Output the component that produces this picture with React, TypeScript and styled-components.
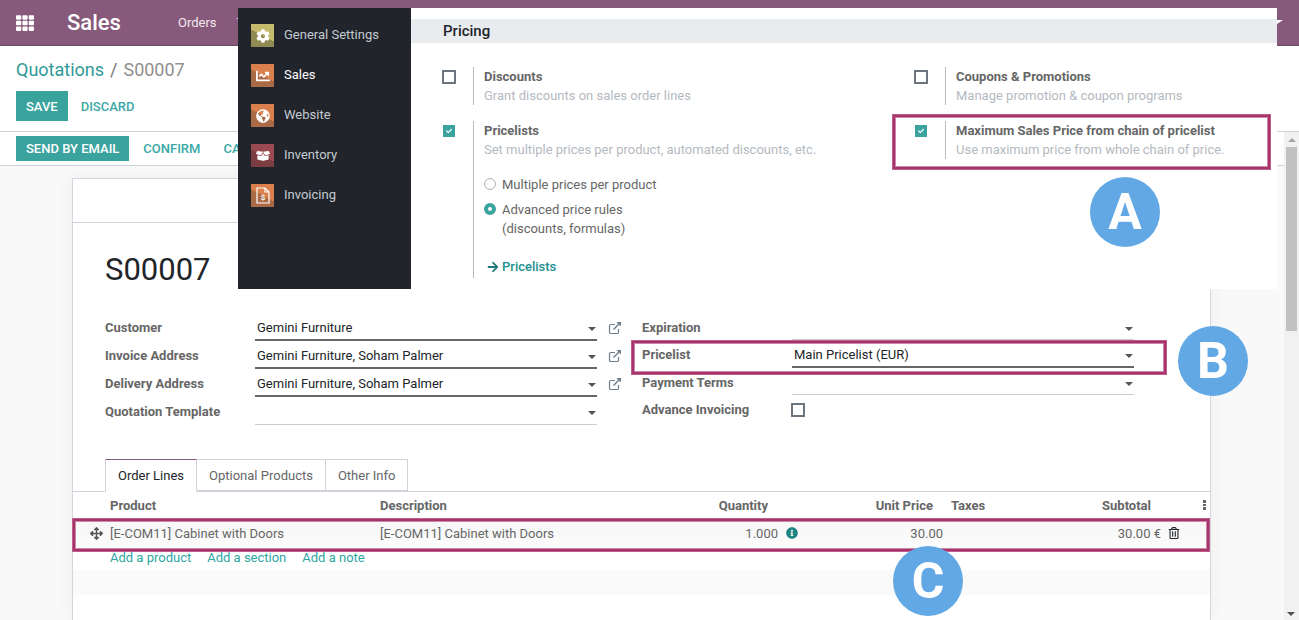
import React from "react";
import styled, { createGlobalStyle } from "styled-components";
import {
  FaTh, FaCog, FaChartLine, FaGlobeAmericas, FaBoxOpen, FaArrowRight, FaInfoCircle,
  FaRegTrashAlt, FaArrowsAlt, FaCheck,
} from "react-icons/fa";

const Global = createGlobalStyle`
  html, body { margin: 0; padding: 0; overflow: hidden; background: #fff; }
  body { font-family: Roboto, "Noto Sans", sans-serif; font-size: 13px; color: #212529; }
  * { box-sizing: border-box; }
`;

const Page = styled.div`
  position: relative; width: 1299px; height: 620px; overflow: hidden;
  display: flex; flex-direction: column; background: #fff;
`;

const Navbar = styled.header`
  height: 46px; flex: none; background: #875a7b; border-bottom: 1px solid #71495f;
  display: flex; align-items: center; color: #fff; position: relative;
`;
const GridBtn = styled.span`margin-left: 16px; width: 18px; display: flex; font-size: 18px;`;
const Brand = styled.span`margin-left: 33px; font-size: 22px; font-weight: 500; width: 111px;`;
const NavItem = styled.span`font-size: 13px; color: #f0e8ee; margin-right: 20px;`;
const NavCaret = styled.span`
  position: absolute; left: 1271px; top: 20px; width: 0; height: 0;
  border-left: 6px solid transparent; border-right: 6px solid transparent; border-top: 4px solid #fff;
`;

const ControlPanel = styled.section`
  height: 86px; flex: none; padding: 0 16px; border-bottom: 1px solid #ced4da; background: #fff;
`;
const Breadcrumb = styled.div`height: 45px; padding-top: 12px; font-size: 18px; line-height: 24px; color: #8f8f8f;`;
const Crumb = styled.span`color: #2f9a97;`;
const Sep = styled.span`margin: 0 6px; color: #777;`;
const Actions = styled.div`display: flex; align-items: center;`;
const PrimaryBtn = styled.span<{ $h: number; $px: number }>`
  height: ${p => p.$h}px; padding: 0 ${p => p.$px}px; background: #3aa39e; color: #fff; font-weight: 500;
  font-size: 13px; display: flex; align-items: center;
`;
const LinkBtn = styled.span<{ $ml: number }>`
  margin-left: ${p => p.$ml}px; color: #3aa9a5; font-weight: 500; font-size: 13px;
`;

const Scroller = styled.div`flex: 1; min-height: 0; display: flex; overflow: hidden;`;
const ScrollContent = styled.div`flex: 1; min-width: 0; background: #f9f9f9; display: flex; flex-direction: column;`;
const StatusBar = styled.div`
  height: 34px; flex: none; background: #fff; border-bottom: 1px solid #ced4da;
  padding: 4px 16px 0; display: flex; align-items: flex-start;
`;
const StatusLink = styled(LinkBtn)`line-height: 25px;`;
const Scrollbar = styled.div`
  width: 15px; flex: none; background: #f1f1f1; display: flex; flex-direction: column; align-items: center; position: relative;
`;
const ArrowUp = styled.span`
  margin-top: 6px; width: 0; height: 0; border-left: 4px solid transparent; border-right: 4px solid transparent;
  border-bottom: 4px solid #a3a3a3;
`;
const Thumb = styled.span`margin-top: 5px; width: 11px; height: 184px; background: #c1c1c1;`;
const ArrowDown = styled.span`
  position: absolute; bottom: 4px; left: 3px; width: 0; height: 0; border-left: 4px solid transparent;
  border-right: 4px solid transparent; border-top: 4px solid #505050;
`;

const Sheet = styled.main`
  margin: 12px 0 0 72px; width: 1139px; flex: 1; background: #fff; border: 1px solid #d3d6de; border-bottom: 0;
  box-shadow: 0 0 18px rgba(0, 0, 0, .05);
`;
const SheetHead = styled.div`height: 44px; border-bottom: 1px solid #ced4da;`;
const Title = styled.h1`
  margin: 0; padding: 25px 0 0 32px; height: 90px; font-size: 31px; line-height: 44px; font-weight: 400; color: #212529;
`;
const Groups = styled.div`display: flex; padding-left: 32px;`;
const Group = styled.div<{ $w: number }>`width: ${p => p.$w}px;`;
const Row = styled.div<{ $h: number }>`
  height: ${p => p.$h}px; display: grid; grid-template-columns: 150px 342px auto; align-items: start;
`;
const Label = styled.label`padding-top: 5px; line-height: 20px; font-weight: 700; font-size: 13px; color: #666;`;
const Control = styled.div<{ $filled?: boolean }>`
  height: 100%; padding: 5px 2px 0; line-height: 20px; position: relative; color: #212529; font-size: 13px;
  border-bottom: ${p => (p.$filled ? "2px solid #666" : "1px solid #ccc")};
`;
const Caret = styled.span`
  position: absolute; right: 1px; top: 14px; width: 0; height: 0; border-left: 4px solid transparent;
  border-right: 4px solid transparent; border-top: 4px solid #555;
`;
const ExtLink = styled.svg`margin: 8px 0 0 11px; display: block;`;
const Box = styled.span<{ $ml?: number; $mt?: number }>`
  display: block; width: 14px; height: 14px; border: 2px solid #6c757d; background: #fff;
  margin-left: ${p => p.$ml ?? 0}px; margin-top: ${p => p.$mt ?? 0}px;
`;

const Tabs = styled.nav`display: flex; margin: 34px 0 0 32px; height: 33px;`;
const Tab = styled.span<{ $active?: boolean }>`
  padding: 0 12px; line-height: 32px; height: ${p => (p.$active ? 33 : 32)}px; font-size: 13px; background: #fff; z-index: 1;
  color: ${p => (p.$active ? "#212529" : "#666")};
  border: 1px solid #ced4da; border-left-width: ${p => (p.$active ? 1 : 0)}px;
  border-top-color: ${p => (p.$active ? "#875a7b" : "#ced4da")};
  border-bottom-color: ${p => (p.$active ? "#fff" : "#ced4da")};
`;
const TableLine = styled.div`height: 1px; margin-top: -1px; background: #ced4da;`;
const gridCols = "37px 270px 278px 120px 165px 100px 118px 50px";
const HeadRow = styled.div`
  display: grid; grid-template-columns: ${gridCols}; height: 26px; align-items: center; font-weight: 700; color: #666; font-size: 13px;
`;
const BodyRow = styled.div`
  display: grid; grid-template-columns: ${gridCols}; height: 30px; align-items: center; color: #666; font-size: 13px;
  background: linear-gradient(#f6f6f6, #fcfcfc);
`;
const HeadRight = styled.span`text-align: right; padding-right: 10px;`;
const Indent = styled.span`padding-left: 8px;`;
const DragCell = styled.span`display: flex; justify-content: flex-end; padding-right: 7px; color: #555; font-size: 13px;`;
const Right = styled.span`text-align: right;`;
const Between = styled.span`display: flex; justify-content: space-between; align-items: center; padding-left: 8px;`;
const InfoIcon = styled(FaInfoCircle)`color: #1f8583; font-size: 12px;`;
const TrashCell = styled.span`padding-left: 7px; display: flex; color: #212529; font-size: 12px;`;
const Dots = styled.span`display: flex; flex-direction: column; gap: 1px; align-items: flex-end; padding-right: 5px;`;
const Dot = styled.span`width: 3px; height: 2.5px; background: #666;`;
const AddRow = styled.div`display: flex; gap: 16px; padding: 0 0 0 37px; height: 22px; line-height: 20px; color: #2ea6a2; font-size: 13px;`;
const Band = styled.div`height: 25px; background: #fafafa;`;

const Overlay = styled.div`
  position: absolute; left: 238px; top: 8px; width: 1039px; height: 281px; display: flex; z-index: 5;
`;
const Sidebar = styled.aside`width: 173px; flex: none; background: #21252b; padding-top: 16px; display: flex; flex-direction: column; gap: 17px;`;
const AppRow = styled.div<{ $active?: boolean }>`
  display: flex; align-items: center; gap: 10px; padding-left: 13px; height: 23px; font-size: 13px;
  color: ${p => (p.$active ? "#fff" : "#c4cad1")};
`;
const AppName = styled.span`margin-top: -2px;`;
const AppIcon = styled.span<{ $light: string; $dark: string }>`
  width: 23px; height: 23px; flex: none; display: flex; align-items: center; justify-content: center;
  background: linear-gradient(28deg, ${p => p.$dark} 50%, ${p => p.$light} 50.5%); color: #fff; font-size: 14px;
`;
const Panel = styled.section`flex: 1; background: #fff; padding-top: 11px;`;
const PanelTitle = styled.h2`
  margin: 0; height: 24px; line-height: 24px; padding-left: 32px; background: #e9ecef; font-size: 15px; font-weight: 500; color: #212529;
`;
const SettingsGrid = styled.div`
  display: grid; grid-template-columns: 472px 1fr; row-gap: 16px; padding: 24px 0 0 32px; align-items: start;
`;
const Setting = styled.div`display: flex;`;
const Check = styled.div`width: 30px; flex: none;`;
const CheckOn = styled.span`
  display: flex; width: 12px; height: 12px; margin: 4px 0 0 0; background: #3aa39e; color: #fff; font-size: 6px;
  align-items: center; justify-content: center;
`;
const SettingBody = styled.div`border-left: 1px solid #bbb; padding-left: 10px;`;
const SettingTitle = styled.div`font-weight: 700; color: #666; line-height: 19px; font-size: 13px;`;
const SettingDesc = styled.div`color: #b4bac1; line-height: 19px; font-size: 13px;`;
const RadioList = styled.div`margin-top: 16px; display: flex; flex-direction: column; gap: 6px;`;
const RadioRow = styled.div`display: flex; gap: 6px; color: #666; line-height: 19px; font-size: 13px;`;
const Radio = styled.span<{ $on?: boolean }>`
  width: 12px; height: 12px; border-radius: 50%; flex: none; margin-top: 3px;
  border: ${p => (p.$on ? "4px solid #3aa39e" : "1px solid #adb5bd")}; background: #fff;
`;
const PriceLink = styled.div`
  margin-top: 19px; padding: 0 0 1px 3px; display: flex; align-items: center; gap: 3px; color: #21908f; font-weight: 500;
  line-height: 20px; font-size: 13px;
`;
const LinkArrow = styled(FaArrowRight)`color: #1f7a78; font-size: 12px;`;

const Highlight = styled.div<{ $x: number; $y: number; $w: number; $h: number }>`
  position: absolute; left: ${p => p.$x}px; top: ${p => p.$y}px; width: ${p => p.$w}px; height: ${p => p.$h}px;
  border: 1px solid #bd5f8c; box-shadow: inset 0 0 0 2px #a9326a, inset 0 0 0 3px #c98aa9; z-index: 6; pointer-events: none;
`;
const Bubble = styled.div<{ $x: number; $y: number }>`
  position: absolute; left: ${p => p.$x}px; top: ${p => p.$y}px; width: 70px; height: 70px; border-radius: 50%;
  background: #62a8e5; color: #fff; font-weight: 700; font-size: 50px; line-height: 70px; text-align: center; z-index: 7;
`;

const Ext = () => (
  <ExtLink width="14" height="14" viewBox="0 0 14 14" fill="none" stroke="#6f7f8c" strokeWidth="1.2">
    <path d="M10.5 8v3.2a1.3 1.3 0 0 1-1.3 1.3H2.8a1.3 1.3 0 0 1-1.3-1.3V4.8a1.3 1.3 0 0 1 1.3-1.3H7" />
    <path d="M5.5 8.5 12 2" strokeWidth="1.5" />
    <path d="M8.5 1h4.5v4.5z" fill="#6f7f8c" stroke="none" />
  </ExtLink>
);
const InvoiceGlyph = () => (
  <svg width="14" height="17" viewBox="0 0 14 17" fill="none" stroke="#fff" strokeWidth="1.2">
    <path d="M1 1h8l4 4v11H1z" />
    <path d="M9 1v4h4" />
    <text x="7" y="13" fontSize="8" fontWeight="700" fill="#fff" stroke="none" textAnchor="middle" fontFamily="Roboto">$</text>
  </svg>
);

const fields = [
  { label: "Customer", value: "Gemini Furniture" },
  { label: "Invoice Address", value: "Gemini Furniture, Soham Palmer" },
  { label: "Delivery Address", value: "Gemini Furniture, Soham Palmer" },
];
const apps = [
  { name: "General Settings", light: "#c6ba6e", dark: "#908b52", icon: <FaCog /> },
  { name: "Sales", light: "#d9804e", dark: "#aa6a45", icon: <FaChartLine />, active: true },
  { name: "Website", light: "#d9804e", dark: "#aa6a45", icon: <FaGlobeAmericas /> },
  { name: "Inventory", light: "#9a4a50", dark: "#7c3d42", icon: <FaBoxOpen /> },
  { name: "Invoicing", light: "#d9804e", dark: "#aa6a45", icon: <InvoiceGlyph /> },
];

export default function App() {
  return (
    <Page>
      <Global />
      <Navbar>
        <GridBtn><FaTh /></GridBtn>
        <Brand>Sales</Brand>
        <NavItem>Orders</NavItem>
        <NavItem>To Invoice</NavItem>
        <NavCaret />
      </Navbar>
      <ControlPanel>
        <Breadcrumb><Crumb>Quotations</Crumb><Sep>/</Sep>S00007</Breadcrumb>
        <Actions>
          <PrimaryBtn $h={30} $px={10}>SAVE</PrimaryBtn>
          <LinkBtn $ml={13}>DISCARD</LinkBtn>
        </Actions>
      </ControlPanel>
      <Scroller>
        <ScrollContent>
          <StatusBar>
            <PrimaryBtn $h={25} $px={10}>SEND BY EMAIL</PrimaryBtn>
            <StatusLink $ml={14}>CONFIRM</StatusLink>
            <StatusLink $ml={23}>CANCEL</StatusLink>
          </StatusBar>
          <Sheet>
            <SheetHead />
            <Title>S00007</Title>
            <Groups>
              <Group $w={537}>
                {fields.map(f => (
                  <Row $h={28} key={f.label}>
                    <Label>{f.label}</Label>
                    <Control $filled>{f.value}<Caret /></Control>
                    <Ext />
                  </Row>
                ))}
                <Row $h={28}>
                  <Label>Quotation Template</Label>
                  <Control><Caret /></Control>
                </Row>
              </Group>
              <Group $w={492}>
                <Row $h={27}><Label>Expiration</Label><Control><Caret /></Control></Row>
                <Row $h={28}><Label>Pricelist</Label><Control $filled>Main Pricelist (EUR)<Caret /></Control></Row>
                <Row $h={27}><Label>Payment Terms</Label><Control><Caret /></Control></Row>
                <Row $h={28}><Label>Advance Invoicing</Label><Box $ml={-1} $mt={8} /></Row>
              </Group>
            </Groups>
            <Tabs>
              <Tab $active>Order Lines</Tab>
              <Tab>Optional Products</Tab>
              <Tab>Other Info</Tab>
            </Tabs>
            <TableLine />
            <HeadRow>
              <span />
              <span>Product</span>
              <span>Description</span>
              <HeadRight>Quantity</HeadRight>
              <HeadRight>Unit Price</HeadRight>
              <Indent>Taxes</Indent>
              <HeadRight>Subtotal</HeadRight>
              <Dots><Dot /><Dot /><Dot /></Dots>
            </HeadRow>
            <BodyRow>
              <DragCell><FaArrowsAlt /></DragCell>
              <span>[E-COM11] Cabinet with Doors</span>
              <span>[E-COM11] Cabinet with Doors</span>
              <Right>1.000</Right>
              <Between><InfoIcon />30.00</Between>
              <span />
              <Right>30.00 €</Right>
              <TrashCell><FaRegTrashAlt /></TrashCell>
            </BodyRow>
            <AddRow><span>Add a product</span><span>Add a section</span><span>Add a note</span></AddRow>
            <Band />
          </Sheet>
        </ScrollContent>
        <Scrollbar><ArrowUp /><Thumb /><ArrowDown /></Scrollbar>
      </Scroller>

      <Overlay>
        <Sidebar>
          {apps.map(a => (
            <AppRow key={a.name} $active={a.active}>
              <AppIcon $light={a.light} $dark={a.dark}>{a.icon}</AppIcon>
              <AppName>{a.name}</AppName>
            </AppRow>
          ))}
        </Sidebar>
        <Panel>
          <PanelTitle>Pricing</PanelTitle>
          <SettingsGrid>
            <Setting>
              <Check><Box $mt={3} $ml={-1} /></Check>
              <SettingBody>
                <SettingTitle>Discounts</SettingTitle>
                <SettingDesc>Grant discounts on sales order lines</SettingDesc>
              </SettingBody>
            </Setting>
            <Setting>
              <Check><Box $mt={3} $ml={-1} /></Check>
              <SettingBody>
                <SettingTitle>Coupons &amp; Promotions</SettingTitle>
                <SettingDesc>Manage promotion &amp; coupon programs</SettingDesc>
              </SettingBody>
            </Setting>
            <Setting>
              <Check><CheckOn><FaCheck /></CheckOn></Check>
              <SettingBody>
                <SettingTitle>Pricelists</SettingTitle>
                <SettingDesc>Set multiple prices per product, automated discounts, etc.</SettingDesc>
                <RadioList>
                  <RadioRow><Radio />Multiple prices per product</RadioRow>
                  <RadioRow><Radio $on /><span>Advanced price rules<br />(discounts, formulas)</span></RadioRow>
                </RadioList>
                <PriceLink><LinkArrow />Pricelists</PriceLink>
              </SettingBody>
            </Setting>
            <Setting>
              <Check><CheckOn><FaCheck /></CheckOn></Check>
              <SettingBody>
                <SettingTitle>Maximum Sales Price from chain of pricelist</SettingTitle>
                <SettingDesc>Use maximum price from whole chain of price.</SettingDesc>
              </SettingBody>
            </Setting>
          </SettingsGrid>
        </Panel>
      </Overlay>

      <Highlight $x={892} $y={114} $w={379} $h={56} />
      <Highlight $x={631} $y={340} $w={536} $h={35} />
      <Highlight $x={72} $y={518} $w={1138} $h={34} />
      <Bubble $x={1090} $y={177}>A</Bubble>
      <Bubble $x={1178} $y={326}>B</Bubble>
      <Bubble $x={893} $y={546}>C</Bubble>
    </Page>
  );
}
